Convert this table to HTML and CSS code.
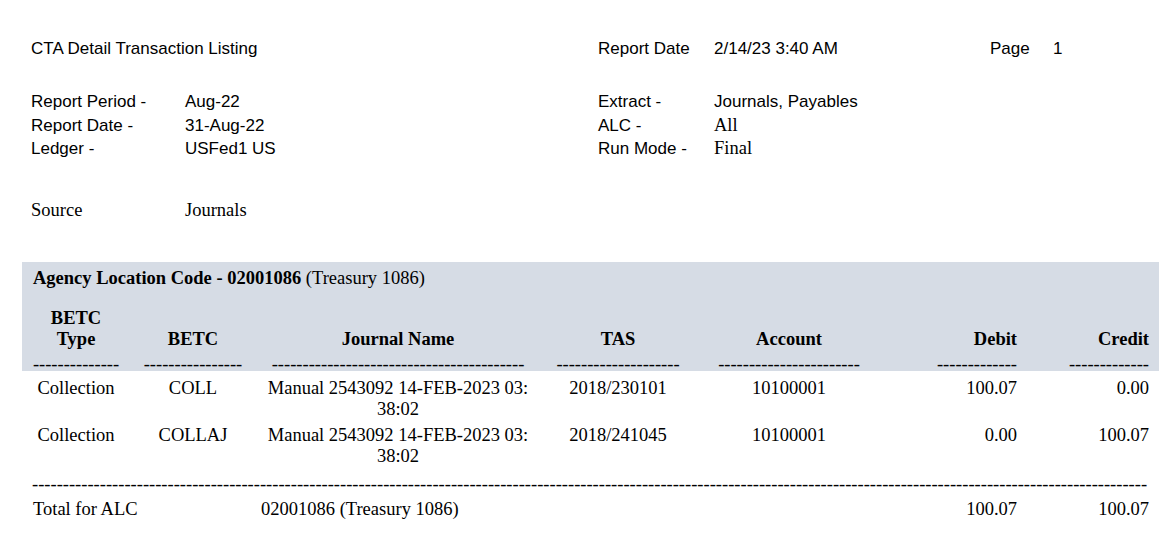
FILE: index.html
```html
<!DOCTYPE html>
<html>
<head>
<meta charset="utf-8">
<link rel="stylesheet" href="styles.css">
</head>
<body>
<div class="page">
  <div class="info">
    <div class="title">CTA Detail Transaction Listing</div>
    <div class="lbl">Report Date</div>
    <div class="val">2/14/23 3:40 AM</div>
    <div class="lbl">Page</div>
    <div class="val">1</div>

    <div class="lbl gap">Report Period -</div>
    <div class="val gap">Aug-22</div>
    <div class="lbl gap">Extract -</div>
    <div class="val gap wide">Journals, Payables</div>

    <div class="lbl">Report Date -</div>
    <div class="val">31-Aug-22</div>
    <div class="lbl">ALC -</div>
    <div class="val wide serif">All</div>

    <div class="lbl">Ledger -</div>
    <div class="val">USFed1 US</div>
    <div class="lbl">Run Mode -</div>
    <div class="val wide serif">Final</div>
  </div>

  <div class="source">
    <div class="src-lbl">Source</div>
    <div>Journals</div>
  </div>

  <div class="band">
    <div class="agency"><b>Agency Location Code - 02001086</b> (Treasury 1086)</div>
    <div class="row head">
      <div class="c">BETC<br>Type</div>
      <div class="c">BETC</div>
      <div class="c">Journal Name</div>
      <div class="c">TAS</div>
      <div class="c">Account</div>
      <div class="r">Debit</div>
      <div class="r">Credit</div>
    </div>
    <div class="row dashes">
      <div class="c">--------------</div>
      <div class="c">----------------</div>
      <div class="c">-----------------------------------------</div>
      <div class="c">--------------------</div>
      <div class="c">-----------------------</div>
      <div class="r">-------------</div>
      <div class="r">-------------</div>
    </div>
  </div>

  <div class="rows">
    <div class="row">
      <div class="c">Collection</div>
      <div class="c">COLL</div>
      <div class="c">Manual 2543092 14-FEB-2023 03:<wbr>38:02</div>
      <div class="c">2018/230101</div>
      <div class="c">10100001</div>
      <div class="r">100.07</div>
      <div class="r">0.00</div>
    </div>
    <div class="row">
      <div class="c">Collection</div>
      <div class="c">COLLAJ</div>
      <div class="c">Manual 2543092 14-FEB-2023 03:<wbr>38:02</div>
      <div class="c">2018/241045</div>
      <div class="c">10100001</div>
      <div class="r">0.00</div>
      <div class="r">100.07</div>
    </div>
  </div>

  <div class="total-line">-------------------------------------------------------------------------------------------------------------------------------------------------------------------------------------</div>

  <div class="total">
    <div class="t-lbl">Total for ALC</div>
    <div class="t-val">02001086 (Treasury 1086)</div>
    <div class="r">100.07</div>
    <div class="r">100.07</div>
  </div>
</div>
</body>
</html>
```

FILE: styles.css
```css
html, body {
  margin: 0;
  padding: 0;
  background: #ffffff;
  color: #000000;
}

.page {
  width: 1170px;
  padding-top: 37px;
  font-family: "Liberation Serif", "Times New Roman", serif;
  font-size: 18.5px;
}

.info {
  display: grid;
  grid-template-columns: 154px 413px 116px 276px 63px auto;
  padding-left: 31px;
  font-family: "Liberation Sans", Arial, sans-serif;
  font-size: 17px;
  line-height: 23.5px;
}

.title {
  grid-column: 1 / 3;
}

.gap {
  margin-top: 29.5px;
}

.wide {
  grid-column: 4 / 7;
}

.serif {
  font-family: "Liberation Serif", "Times New Roman", serif;
  font-size: 18.5px;
}

.source {
  display: flex;
  padding-left: 31px;
  margin-top: 38.5px;
  line-height: 23.5px;
}

.src-lbl {
  width: 154px;
}

.band {
  margin: 39.5px 11px 0 22px;
  background: #d6dce5;
  padding-top: 6px;
  line-height: 21px;
}

.agency {
  padding-left: 11px;
  margin-bottom: 19px;
}

.row {
  display: grid;
  grid-template-columns: 108px 126px 284px 156px 186px 135px 132px;
  align-items: end;
  line-height: 21px;
}

.head {
  font-weight: bold;
}

.dashes {
  margin-top: 8px;
  line-height: 13px;
}

.c {
  text-align: center;
}

.r {
  text-align: right;
}

.rows {
  margin-left: 22px;
  padding-top: 6.5px;
  display: flex;
  flex-direction: column;
  gap: 5px;
}

.rows .row {
  align-items: start;
}

.total-line {
  margin: 7px 0 0 32px;
  white-space: nowrap;
  line-height: 21px;
}

.total {
  display: grid;
  grid-template-columns: 234px 626px 135px 132px;
  margin: 4px 0 0 22px;
  line-height: 21px;
}

.t-lbl {
  padding-left: 11px;
}

.t-val {
  padding-left: 5px;
}
```
